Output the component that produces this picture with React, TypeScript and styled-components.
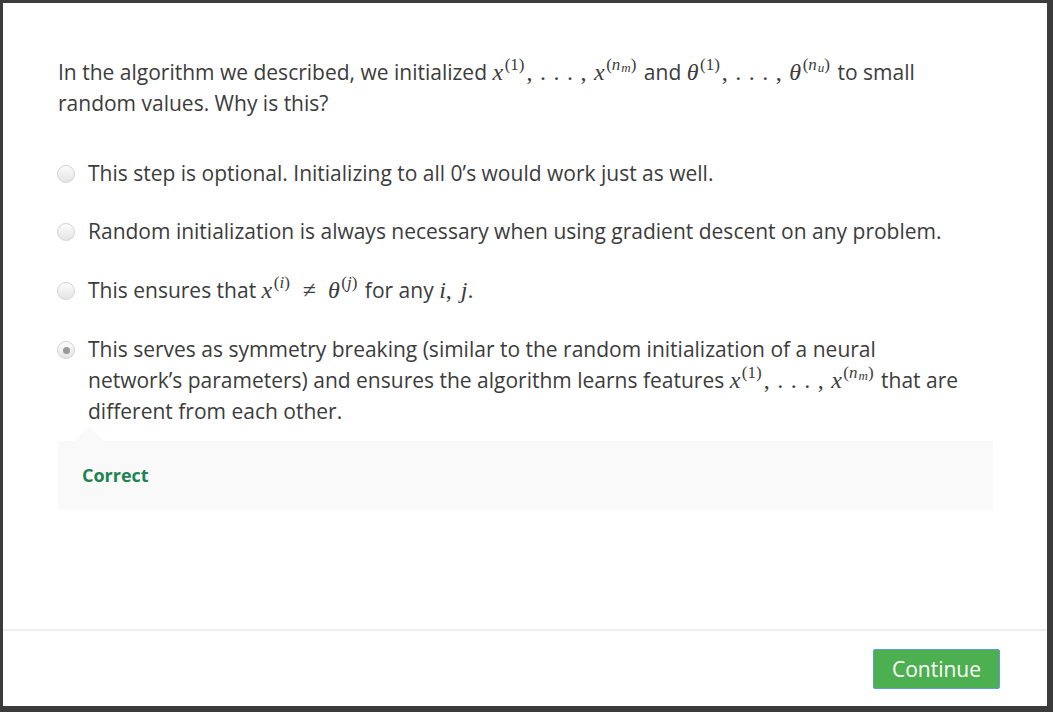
import React from "react";
import styled, { createGlobalStyle } from "styled-components";

const Global = createGlobalStyle`
  html, body { margin: 0; padding: 0; background: #3b3b3b; }
  body { font-family: "Open Sans", "Liberation Sans", sans-serif; }
`;

const Backdrop = styled.div`
  width: 1053px;
  height: 712px;
  box-sizing: border-box;
  padding: 3px 6px 6px 3px;
  background: #3b3b3b;
`;

const Modal = styled.div`
  background: #fff;
  height: 100%;
  display: flex;
  flex-direction: column;
`;

const Body = styled.div`
  flex: 1;
  padding: 54px 54px 0 55px;
  color: #3c3c3c;
  font-size: 21px;
  line-height: 31px;
`;

const Question = styled.div`
  max-width: 900px;
  margin-bottom: 39px;
`;

const Options = styled.div`
  display: flex;
  flex-direction: column;
  gap: 27px;
`;

const Option = styled.label<{ $tall?: boolean }>`
  display: flex;
  align-items: flex-start;
  gap: 13px;
  padding: ${(p) => (p.$tall ? "1px 0" : "0")};
`;

const Radio = styled.span<{ $checked?: boolean }>`
  flex: none;
  width: 18px;
  height: 18px;
  margin-top: 7px;
  margin-left: -1px;
  border-radius: 50%;
  box-sizing: border-box;
  border: 1px solid #d4d4d4;
  background: linear-gradient(#fcfcfc, #e4e4e4);
  display: flex;
  align-items: center;
  justify-content: center;
  &::after {
    content: "";
    display: ${(p) => (p.$checked ? "block" : "none")};
    width: 7px;
    height: 7px;
    border-radius: 50%;
    background: #999;
  }
`;

const OptionText = styled.span`
  max-width: 880px;
`;

const M = styled.span`
  font-family: "Liberation Serif", "DejaVu Serif", serif;
  font-size: 24px;
  word-spacing: 1.5px;
  white-space: nowrap;
`;

const I = styled.i`
  font-style: italic;
`;

const Base = styled.i`
  font-style: italic;
  margin-right: 0.5px;
`;

const Sup = styled.sup`
  font-size: 17px;
  vertical-align: 10px;
  line-height: 0;
  margin: 0 2px 0 1px;
  word-spacing: 0;
`;

const Sub = styled.sub`
  font-size: 13px;
  font-style: italic;
  vertical-align: -2px;
  line-height: 0;
  margin-left: 1px;
`;

const Rel = styled.span`
  margin: 0 12px 0 11px;
`;

const Sep = styled.span`
  display: inline-block;
  margin-right: 9px;
`;

const Feedback = styled.div`
  position: relative;
  margin-top: 14px;
  background: #f9f9f9;
  height: 69px;
  display: flex;
  align-items: center;
  padding-left: 24px;
  &::before {
    content: "";
    position: absolute;
    left: 16px;
    top: -15px;
    border-left: 15px solid transparent;
    border-right: 15px solid transparent;
    border-bottom: 15px solid #f9f9f9;
  }
`;

const Correct = styled.span`
  color: #1f8354;
  font-weight: 700;
  font-size: 18px;
`;

const Footer = styled.div`
  border-top: 2px solid #eeeeee;
  height: 77px;
  box-sizing: border-box;
  display: flex;
  align-items: center;
  justify-content: flex-end;
  padding: 0 47px 0 0;
`;

const Button = styled.button`
  width: 127px;
  height: 40px;
  background: #4caf50;
  color: #fff;
  border: 1px solid #5b9ee0;
  border-radius: 2px;
  font-family: "Open Sans", "Liberation Sans", sans-serif;
  font-size: 21px;
  cursor: pointer;
`;

const Sym = ({ base, sup, sub, italic }: { base: string; sup: string; sub?: string; italic?: boolean }) => (
  <>
    <Base>{base}</Base>
    <Sup>
      (
      {italic ? <I>{sup}</I> : sup}
      {sub && <Sub>{sub}</Sub>})
    </Sup>
  </>
);

export default function App() {
  return (
    <>
      <Global />
      <Backdrop>
        <Modal>
          <Body>
            <Question>
              In the algorithm we described, we initialized{" "}
              <M>
                <Sym base="x" sup="1" />, . . . , <Sym base="x" sup="n" sub="m" italic />
              </M>{" "}
              and{" "}
              <M>
                <Sym base="θ" sup="1" />, . . . , <Sym base="θ" sup="n" sub="u" italic />
              </M>{" "}
              to small random values. Why is this?
            </Question>
            <Options>
              <Option>
                <Radio />
                <OptionText>This step is optional. Initializing to all 0’s would work just as well.</OptionText>
              </Option>
              <Option>
                <Radio />
                <OptionText>Random initialization is always necessary when using gradient descent on any problem.</OptionText>
              </Option>
              <Option $tall>
                <Radio />
                <OptionText>
                  This ensures that{" "}
                  <M>
                    <Sym base="x" sup="i" italic />
                    <Rel>≠</Rel>
                    <Sym base="θ" sup="j" italic />
                  </M>{" "}
                  for any{" "}
                  <M>
                    <I>i</I>
                    <Sep>,</Sep>
                    <I>j</I>.
                  </M>
                </OptionText>
              </Option>
              <Option>
                <Radio $checked />
                <OptionText>
                  This serves as symmetry breaking (similar to the random initialization of a neural network’s
                  parameters) and ensures the algorithm learns features{" "}
                  <M>
                    <Sym base="x" sup="1" />, . . . , <Sym base="x" sup="n" sub="m" italic />
                  </M>{" "}
                  that are different from each other.
                </OptionText>
              </Option>
            </Options>
            <Feedback>
              <Correct>Correct</Correct>
            </Feedback>
          </Body>
          <Footer>
            <Button>Continue</Button>
          </Footer>
        </Modal>
      </Backdrop>
    </>
  );
}
